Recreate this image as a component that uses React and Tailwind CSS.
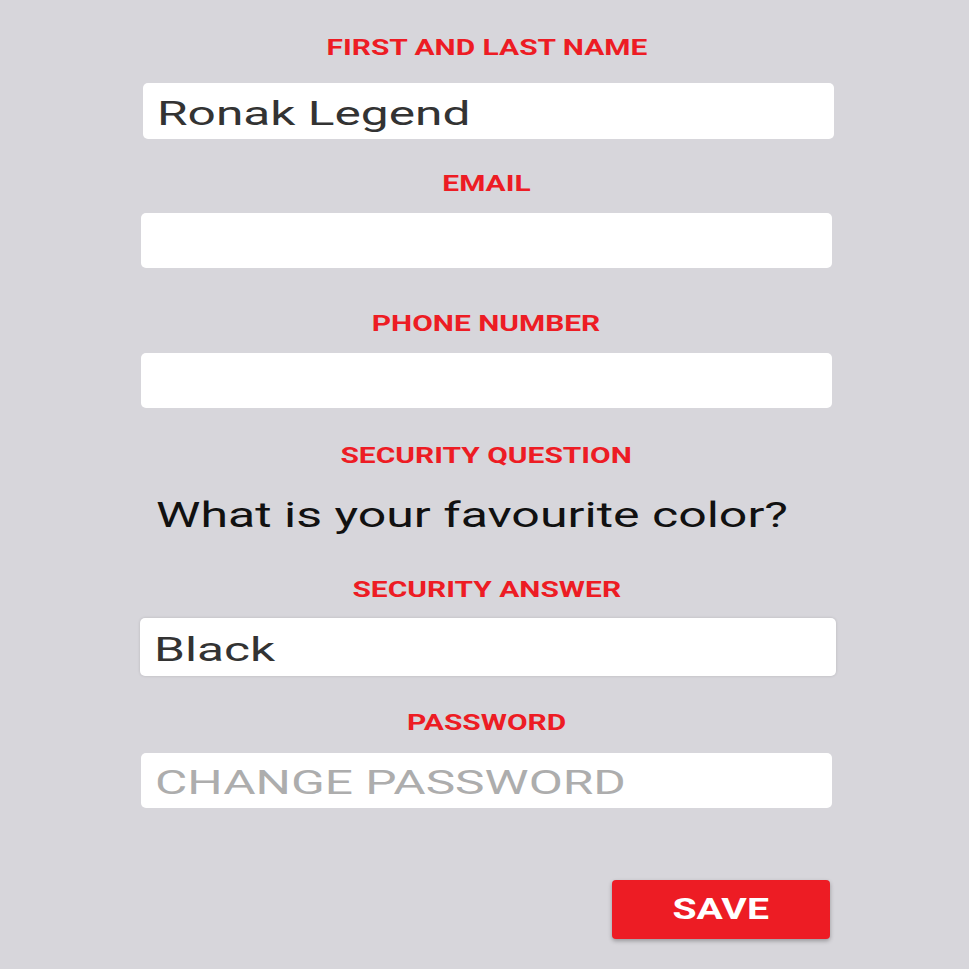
import { useState } from "react";

// labels and values are stretched wide in the screenshot, so text spans get a scale-x
function Label({ children, className = "" }) {
  return (
    <div className={"flex justify-center h-6 " + className}>
      <span className="inline-block origin-center scale-x-[1.36] text-[22px] leading-6 font-bold text-[#ed1c24] whitespace-nowrap">
        {children}
      </span>
    </div>
  );
}

function Field({ value, placeholder, className = "" }) {
  const empty = !value;
  return (
    <div className={"bg-white rounded-[5px] flex items-center px-[14px] pt-[3px] overflow-hidden " + className}>
      {(value || placeholder) && (
        <span
          className={
            "inline-block origin-left scale-x-[1.46] text-[34px] leading-none whitespace-nowrap " +
            (empty ? "text-[#adadad]" : "text-[#333333]")
          }
        >
          {value || placeholder}
        </span>
      )}
    </div>
  );
}

export default function App() {
  const [form] = useState({
    name: "Ronak Legend",
    email: "",
    phone: "",
    question: "What is your favourite color?",
    answer: "Black",
  });

  return (
    <div className="min-h-screen bg-[#d7d6db] font-['Roboto',sans-serif]">
      <div className="w-[691px] ml-[141px] pt-[36px] flex flex-col">
        <Label>FIRST AND LAST NAME</Label>
        <Field value={form.name} className="mt-[23px] h-[56px] ml-[2px] mr-[-2px]" />

        <Label className="mt-[33px]">EMAIL</Label>
        <Field value={form.email} className="mt-[17px] h-[55px]" />

        <Label className="mt-[44px]">PHONE NUMBER</Label>
        <Field value={form.phone} className="mt-[17px] h-[55px]" />

        <Label className="mt-[36px]">SECURITY QUESTION</Label>
        <div className="mt-[28px] px-[15px]">
          <span className="inline-block origin-left scale-x-[1.43] text-[35px] leading-[40px] text-[#111111] whitespace-nowrap">
            {form.question}
          </span>
        </div>

        <Label className="mt-[42px]">SECURITY ANSWER</Label>
        <Field
          value={form.answer}
          className="mt-[16px] h-[58px] ml-[-1px] mr-[-4px] shadow-[0_0_3px_rgba(0,0,0,0.15)]"
        />

        <Label className="mt-[35px]">PASSWORD</Label>
        <Field placeholder="CHANGE PASSWORD" className="mt-[18px] h-[55px]" />

        <div className="flex justify-end mt-[72px] mr-[2px]">
          <button className="w-[218px] h-[59px] bg-[#ed1c24] rounded-[4px] shadow-[0_2px_4px_rgba(0,0,0,0.3)] flex items-center justify-center">
            <span className="inline-block scale-x-[1.35] text-[29px] font-bold text-white leading-none">SAVE</span>
          </button>
        </div>
      </div>
    </div>
  );
}
